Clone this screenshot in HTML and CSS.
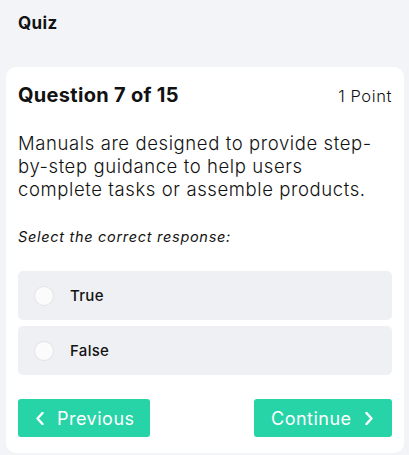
FILE: index.html
```html
<!DOCTYPE html>
<html lang="en">
<head>
<meta charset="utf-8">
<link rel="stylesheet" href="styles.css">
</head>
<body>
<header class="top">Quiz</header>
<main class="card">
  <div class="title-row">
    <h1 class="title">Question 7 of 15</h1>
    <span class="points">1 Point</span>
  </div>
  <p class="question">Manuals are designed to provide step-by-step guidance to help users complete tasks or assemble products.</p>
  <p class="prompt">Select the correct response:</p>
  <div class="options">
    <label class="option"><span class="radio"></span><span class="opt-text">True</span></label>
    <label class="option"><span class="radio"></span><span class="opt-text">False</span></label>
  </div>
  <div class="nav">
    <button class="btn btn-prev">
      <svg class="chev" width="8" height="13" viewBox="0 0 8 13"><path d="M6.5 1 L1.5 6.5 L6.5 12" fill="none" stroke="#fff" stroke-width="2.4" stroke-linecap="round" stroke-linejoin="round"/></svg>
      <span>Previous</span>
    </button>
    <button class="btn btn-next">
      <span>Continue</span>
      <svg class="chev" width="8" height="13" viewBox="0 0 8 13"><path d="M1.5 1 L6.5 6.5 L1.5 12" fill="none" stroke="#fff" stroke-width="2.4" stroke-linecap="round" stroke-linejoin="round"/></svg>
    </button>
  </div>
</main>
</body>
</html>
```
FILE: styles.css
```css
* { box-sizing: border-box; }
html, body { margin: 0; padding: 0; }
body {
  background: #f3f4f8;
  font-family: "Inter", "Open Sans", sans-serif;
  color: #121212;
  width: 409px;
  height: 455px;
  overflow: hidden;
}
.top {
  font-size: 17px;
  font-weight: 700;
  line-height: 20px;
  letter-spacing: 0.4px;
  padding: 13px 18px 0 18px;
  height: 67px;
}
.card {
  margin: 0 5px 0 6px;
  background: #fff;
  border-radius: 10px;
  padding: 14px 12px 16px 12px;
}
.title-row {
  display: flex;
  justify-content: space-between;
  align-items: baseline;
}
.title {
  margin: 0;
  font-size: 20px;
  font-weight: 700;
  line-height: 28px;
  letter-spacing: 0.3px;
}
.points {
  font-size: 16.5px;
  font-weight: 300;
  letter-spacing: 0.6px;
}
.question {
  margin: 23px 0 0 0;
  max-width: 364px;
  font-size: 18.5px;
  line-height: 23px;
  font-weight: 300;
  letter-spacing: 0.6px;
}
.prompt {
  margin: 26px 0 0 0;
  font-size: 14.5px;
  line-height: 20px;
  font-style: italic;
  font-weight: 400;
  letter-spacing: 0.7px;
}
.options {
  margin-top: 24px;
  display: flex;
  flex-direction: column;
  gap: 6px;
}
.option {
  display: flex;
  align-items: center;
  height: 49px;
  padding-left: 16px;
  background: #eff0f4;
  border-radius: 5px;
}
.radio {
  width: 20px;
  height: 20px;
  border-radius: 50%;
  background: #fbfbfc;
  border: 1px solid #e2e3e8;
  margin-right: 16px;
}
.opt-text {
  font-size: 15px;
  font-weight: 500;
  letter-spacing: 0.3px;
}
.nav {
  margin-top: 24px;
  display: flex;
  justify-content: space-between;
}
.btn {
  display: flex;
  align-items: center;
  height: 38px;
  background: #26d4a8;
  border: none;
  border-radius: 3px;
  color: #fff;
  font-family: inherit;
  font-size: 18px;
  font-weight: 400;
  gap: 13px;
  letter-spacing: 0.5px;
}
.btn-prev { width: 132px; padding-left: 18px; }
.btn-next { width: 138px; padding-left: 17px; }
```
